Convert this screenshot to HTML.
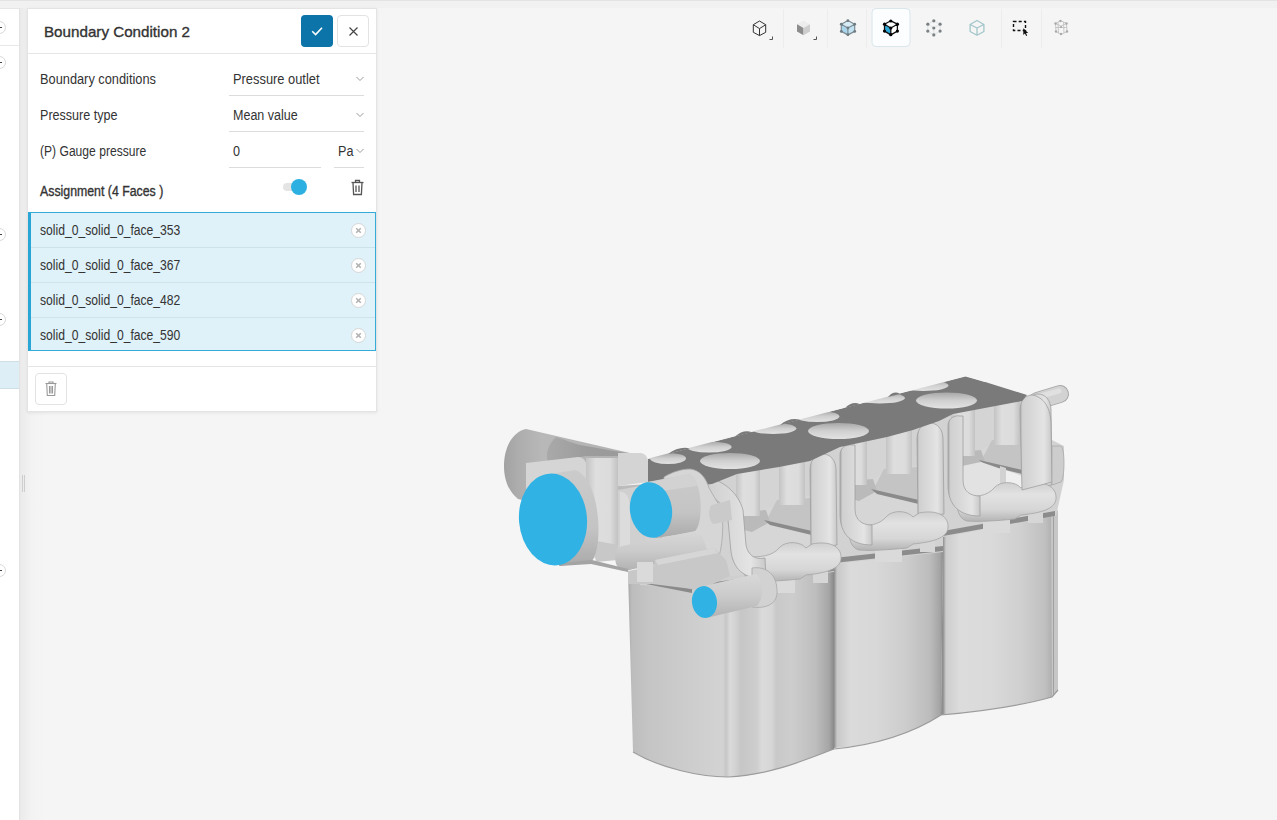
<!DOCTYPE html>
<html><head><meta charset="utf-8">
<style>
*{box-sizing:border-box;margin:0;padding:0}
html,body{width:1277px;height:820px;overflow:hidden;background:#f5f5f5;font-family:"Liberation Sans",sans-serif;color:#333}
.abs{position:absolute}
#topline{left:0;top:0;width:1277px;height:1px;background:#e3e3e3}
#sidebar{left:0;top:8px;width:20px;height:812px;background:#fff;border-right:1px solid #e2e2e2;border-top:1px solid #e6e6e6}
#band{left:0;top:1px;width:1277px;height:7px;background:#f1f1f1}
#gutter{left:20px;top:8px;width:24px;height:812px;background:linear-gradient(to right,#eaeaea 0px,#efefef 6px,#f3f3f3 12px,#f5f5f5 24px)}
.sbcirc{position:absolute;left:-7px;width:13px;height:13px;border:1px solid #d8d8d8;border-radius:50%;background:#fff}
.sbcirc:after{content:"";position:absolute;left:5px;top:5px;width:3px;height:1px;background:#444}
#panel{left:27px;top:8px;width:350px;height:404px;background:#fff;border:1px solid #e4e4e4;box-shadow:0 1px 3px rgba(0,0,0,0.08)}
.lbl{position:absolute;font-size:14px;line-height:14px;color:#333;white-space:nowrap;transform-origin:0 0}
.uline{position:absolute;height:1px;background:#dcdcdc}
.chev{position:absolute;width:7px;height:5px}
</style></head><body>
<!--MODEL--><svg class="abs" style="left:0;top:0" width="1277" height="820" viewBox="0 0 1277 820"><defs><linearGradient id="cyl1" x1="628" y1="0" x2="834" y2="0" gradientUnits="userSpaceOnUse"><stop offset="0.0" stop-color="#a8a8a8"/><stop offset="0.0194" stop-color="#bdbdbd"/><stop offset="0.1068" stop-color="#c5c5c5"/><stop offset="0.301" stop-color="#cdcdcd"/><stop offset="0.4612" stop-color="#d3d3d3"/><stop offset="0.4757" stop-color="#c6c6c6"/><stop offset="0.4951" stop-color="#dadada"/><stop offset="0.5243" stop-color="#d1d1d1"/><stop offset="0.5485" stop-color="#c6c6c6"/><stop offset="0.6262" stop-color="#cecece"/><stop offset="0.6505" stop-color="#dbdbdb"/><stop offset="0.699" stop-color="#d6d6d6"/><stop offset="0.7184" stop-color="#c9c9c9"/><stop offset="0.7961" stop-color="#cdcdcd"/><stop offset="0.9078" stop-color="#bebebe"/><stop offset="0.9757" stop-color="#a6a6a6"/><stop offset="1.0" stop-color="#888888"/></linearGradient><linearGradient id="cyl2" x1="834" y1="0" x2="943" y2="0" gradientUnits="userSpaceOnUse"><stop offset="0.0" stop-color="#8c8c8c"/><stop offset="0.0275" stop-color="#c8c8c8"/><stop offset="0.1468" stop-color="#dadada"/><stop offset="0.3761" stop-color="#d8d8d8"/><stop offset="0.6514" stop-color="#cdcdcd"/><stop offset="0.8807" stop-color="#bcbcbc"/><stop offset="0.9725" stop-color="#a4a4a4"/><stop offset="1.0" stop-color="#8c8c8c"/></linearGradient><linearGradient id="cyl3" x1="943" y1="0" x2="1055" y2="0" gradientUnits="userSpaceOnUse"><stop offset="0.0" stop-color="#8e8e8e"/><stop offset="0.0268" stop-color="#cdcdcd"/><stop offset="0.1518" stop-color="#dcdcdc"/><stop offset="0.4196" stop-color="#dadada"/><stop offset="0.6875" stop-color="#d0d0d0"/><stop offset="0.9107" stop-color="#c0c0c0"/><stop offset="1.0" stop-color="#a8a8a8"/></linearGradient><linearGradient id="head" x1="504" y1="0" x2="600" y2="0" gradientUnits="userSpaceOnUse"><stop offset="0" stop-color="#a2a2a2"/><stop offset="0.15" stop-color="#adadad"/><stop offset="0.4" stop-color="#b8b8b8"/><stop offset="1" stop-color="#b4b4b4"/></linearGradient><linearGradient id="topband" x1="545" y1="0" x2="648" y2="0" gradientUnits="userSpaceOnUse"><stop offset="0" stop-color="#aaaaaa"/><stop offset="0.4" stop-color="#9c9c9c"/><stop offset="1" stop-color="#999999"/></linearGradient><linearGradient id="tube" x1="0" y1="0" x2="1" y2="0"><stop offset="0" stop-color="#c4c4c4"/><stop offset="0.3" stop-color="#dedede"/><stop offset="0.75" stop-color="#dcdcdc"/><stop offset="1" stop-color="#c2c2c2"/></linearGradient><linearGradient id="arch" x1="0" y1="0" x2="1" y2="0"><stop offset="0" stop-color="#a8a8a8"/><stop offset="0.08" stop-color="#d0d0d0"/><stop offset="0.5" stop-color="#dcdcdc"/><stop offset="0.75" stop-color="#e4e4e4"/><stop offset="1" stop-color="#c8c8c8"/></linearGradient><linearGradient id="hole" x1="0" y1="0" x2="0" y2="1"><stop offset="0" stop-color="#a8a8a8"/><stop offset="0.5" stop-color="#d0d0d0"/><stop offset="1" stop-color="#e2e2e2"/></linearGradient><linearGradient id="bodyc" x1="0" y1="0" x2="0" y2="1"><stop offset="0" stop-color="#cbcbcb"/><stop offset="0.6" stop-color="#c4c4c4"/><stop offset="1" stop-color="#aaaaaa"/></linearGradient><linearGradient id="rodg" x1="0" y1="0" x2="0" y2="1"><stop offset="0" stop-color="#d8d8d8"/><stop offset="0.5" stop-color="#cbcbcb"/><stop offset="1" stop-color="#b2b2b2"/></linearGradient><linearGradient id="railg" x1="0" y1="0" x2="0" y2="1"><stop offset="0" stop-color="#cfcfcf"/><stop offset="0.3" stop-color="#e2e2e2"/><stop offset="0.7" stop-color="#d6d6d6"/><stop offset="1" stop-color="#b4b4b4"/></linearGradient><linearGradient id="wedgeg" x1="0" y1="0" x2="0" y2="1"><stop offset="0" stop-color="#d0d0d0"/><stop offset="1" stop-color="#bcbcbc"/></linearGradient></defs><path d="M628,572 L633,752 C660,768 700,777 728,777 C770,775 805,760 834,749 L834,570 L690,586 Z" fill="url(#cyl1)" /><path d="M834,562 L834,748 C865,746 905,738 941,715 L943,550 Z" fill="url(#cyl2)" /><path d="M943,535 L941,715 C975,712 1020,706 1052,697 L1055,515 Z" fill="url(#cyl3)" /><path d="M1051,514 L1058,510 L1058,690 L1052,697 Z" fill="#c6c6c6" /><path d="M1053,515 L1054,515 L1054,695 L1053,696 Z" fill="#a0a0a0" /><path d="M633,752 C660,768 700,777 728,777 C770,775 805,760 834,749 C865,746 905,738 941,715 C975,712 1020,706 1052,697 L1058,690" fill="none" stroke="#9c9c9c" stroke-width="1.2"/><path d="M645,470 L1025,397 L1052,440 L1064,446 L1064,480 L1056,516 L943,537 L943,552 L834,564 L834,572 L700,588 L640,585 Z" fill="#d2d2d2" /><path d="M630,572 L700,580 L834,564 L834,570 L700,588 Z" fill="#cfcfcf" /><path d="M634,577 L692,589 L692,593 L636,582 Z" fill="#8a8a8a" /><path d="M700,584 L834,566 L834,571 L700,589 Z" fill="#8e8e8e" /><path d="M834,558 L943,546 L943,551 L834,563 Z" fill="#8c8c8c" /><path d="M943,531 L1055,511 L1055,516 L943,536 Z" fill="#8c8c8c" /><path d="M963,466 L1004,458 L1020,463 L1020,489 L963,496 Z" fill="#e4e4e4" /><path d="M1006,462 L1021,464 L1021,488 L1007,490 Z" fill="#efefef" /><path d="M1000,458 L1006,458 L1006,490 L1000,491 Z" fill="#d0d0d0" /><path d="M1037,401 L1060,394" stroke="#a6a6a6" stroke-width="18" stroke-linecap="round"/><path d="M1037,401 L1060,394" stroke="#d2d2d2" stroke-width="16" stroke-linecap="round"/><path d="M1037,397 L1059,391" stroke="#e0e0e0" stroke-width="5" stroke-linecap="round"/><path d="M746.0,500.0 L835.0,495.0 835.0,560.0 746.0,572.0 Z" fill="#d6d6d6" /><path d="M760.0,470.0 L779.0,466.0 779.0,503.0 760.0,512.0 Z" fill="#d4d4d4" /><path d="M777.0,500.0 L812.0,498.0 822.0,537.0 766.0,521.0 Z" fill="#c4c4c4" /><path d="M742.0,512.0 L766.0,510.0 770.0,522.0 752.0,532.0 744.0,530.0 Z" fill="#bababa" /><path d="M764.0,520.0 L812.0,531.0 820.0,537.0 770.0,525.0 Z" fill="#8a8a8a" /><rect x="736" y="466" width="24" height="50" fill="url(#tube)"/><rect x="779" y="455" width="26" height="50" fill="url(#tube)"/><rect x="768" y="579" width="27" height="14" fill="#dadada"/><rect x="813" y="568" width="15" height="15" fill="#d6d6d6"/><path d="M810.0,470.0 C810.0,458.0 818.0,454.0 823.0,454.0 C830.0,454.0 836.0,460.0 836.0,470.0 L837.0,545.0 811.0,548.0 Z" fill="url(#arch)" stroke="#a0a0a0" stroke-width="0.8"/><path d="M745.0,557.0 C760.0,557.0 772.0,557.0 780.0,547.0 C786.0,541.0 800.0,541.0 806.0,548.0 L812.0,544.0 C832.0,540.0 842.0,548.0 841.0,559.0 C840.0,569.0 826.0,573.0 806.0,575.0 L800.0,579.0 C780.0,581.0 762.0,582.0 752.0,581.0 C742.0,579.0 740.0,562.0 745.0,557.0 Z" fill="url(#railg)" stroke="#a4a4a4" stroke-width="0.8"/><path d="M853.0,469.0 L942.0,464.0 942.0,529.0 853.0,541.0 Z" fill="#d6d6d6" /><path d="M867.0,439.0 L886.0,435.0 886.0,472.0 867.0,481.0 Z" fill="#d4d4d4" /><path d="M884.0,469.0 L919.0,467.0 929.0,506.0 873.0,490.0 Z" fill="#c4c4c4" /><path d="M849.0,481.0 L873.0,479.0 877.0,491.0 859.0,501.0 851.0,499.0 Z" fill="#bababa" /><path d="M871.0,489.0 L919.0,500.0 927.0,506.0 877.0,494.0 Z" fill="#8a8a8a" /><rect x="843" y="435" width="24" height="50" fill="url(#tube)"/><rect x="886" y="424" width="26" height="50" fill="url(#tube)"/><rect x="875" y="548" width="27" height="14" fill="#dadada"/><rect x="920" y="537" width="15" height="15" fill="#d6d6d6"/><path d="M917.0,439.0 C917.0,427.0 925.0,423.0 930.0,423.0 C937.0,423.0 943.0,429.0 943.0,439.0 L944.0,514.0 918.0,517.0 Z" fill="url(#arch)" stroke="#a0a0a0" stroke-width="0.8"/><path d="M852.0,526.0 C867.0,526.0 879.0,526.0 887.0,516.0 C893.0,510.0 907.0,510.0 913.0,517.0 L919.0,513.0 C939.0,509.0 949.0,517.0 948.0,528.0 C947.0,538.0 933.0,542.0 913.0,544.0 L907.0,548.0 C887.0,550.0 869.0,551.0 859.0,550.0 C849.0,548.0 847.0,531.0 852.0,526.0 Z" fill="url(#railg)" stroke="#a4a4a4" stroke-width="0.8"/><path d="M961.0,440.0 L1050.0,435.0 1050.0,500.0 961.0,512.0 Z" fill="#d6d6d6" /><path d="M975.0,410.0 L994.0,406.0 994.0,443.0 975.0,452.0 Z" fill="#d4d4d4" /><path d="M992.0,440.0 L1027.0,438.0 1037.0,477.0 981.0,461.0 Z" fill="#c4c4c4" /><path d="M957.0,452.0 L981.0,450.0 985.0,462.0 967.0,472.0 959.0,470.0 Z" fill="#bababa" /><path d="M979.0,460.0 L1027.0,471.0 1035.0,477.0 985.0,465.0 Z" fill="#8a8a8a" /><rect x="951" y="406" width="24" height="50" fill="url(#tube)"/><rect x="994" y="395" width="26" height="50" fill="url(#tube)"/><rect x="983" y="519" width="27" height="14" fill="#dadada"/><rect x="1028" y="508" width="15" height="15" fill="#d6d6d6"/><path d="M962,466 L981,462 L1004,470 L1022,476 L1022,492 L962,498 Z" fill="#e2e2e2" /><path d="M1005,470 L1022,476 L1022,492 L1006,493 Z" fill="#efefef" /><path d="M1000,466 L1006,468 L1006,494 L1000,494 Z" fill="#d2d2d2" /><path d="M1025.0,410.0 C1025.0,398.0 1033.0,394.0 1038.0,394.0 C1045.0,394.0 1051.0,400.0 1051.0,410.0 L1052.0,485.0 1026.0,488.0 Z" fill="url(#arch)" stroke="#a0a0a0" stroke-width="0.8"/><path d="M960.0,497.0 C975.0,497.0 987.0,497.0 995.0,487.0 C1001.0,481.0 1015.0,481.0 1021.0,488.0 L1027.0,484.0 C1047.0,480.0 1057.0,488.0 1056.0,499.0 C1055.0,509.0 1041.0,513.0 1021.0,515.0 L1015.0,519.0 C995.0,521.0 977.0,522.0 967.0,521.0 C957.0,519.0 955.0,502.0 960.0,497.0 Z" fill="url(#railg)" stroke="#a4a4a4" stroke-width="0.8"/><path d="M840,455 C840,447 847,444 852,445 L855,445 L855,509 C855,521 863,525 872,525 L872,545 C852,545 840,535 840,514 Z" fill="url(#arch)" stroke="#a0a0a0" stroke-width="0.8"/><path d="M948,426 C948,418 955,415 960,416 L963,416 L963,480 C963,492 971,496 980,496 L980,516 C960,516 948,506 948,485 Z" fill="url(#arch)" stroke="#a0a0a0" stroke-width="0.8"/><path d="M708,478 C722,480 738,492 743,510 L746,545 C748,556 756,560 765,558 L766,578 C748,580 734,572 731,552 L728,520 C726,505 716,498 704,494 Z" fill="url(#arch)" stroke="#a0a0a0" stroke-width="0.8"/><path d="M1020,410 C1020,400 1026,395 1032,395 C1044,397 1051,408 1051,425 L1052,482 L1022,490 Z" fill="url(#arch)" stroke="#a0a0a0" stroke-width="0.8"/><path d="M648,459 L966,376 L1027,395 L1022,401 L953,414 L939,421 L913,430 L887,437 L840,447 L810,461 L779,467 L737,474 L712,484 L690,486 L670,480 L648,482 Z" fill="#7a7a7a" /><ellipse cx="668.0" cy="458.5" rx="18.0" ry="5.5" fill="url(#hole)" /><ellipse cx="709.0" cy="447.0" rx="22.6" ry="5.5" fill="url(#hole)" /><ellipse cx="773.2" cy="428.5" rx="23.2" ry="5.5" fill="url(#hole)" /><ellipse cx="817.2" cy="416.5" rx="22.2" ry="5.5" fill="url(#hole)" /><ellipse cx="879.8" cy="398.0" rx="25.2" ry="5.5" fill="url(#hole)" /><ellipse cx="923.1" cy="385.5" rx="25.4" ry="5.5" fill="url(#hole)" /><path d="M640,470 L648.5,458.5 L965.4,376.5 L985,382 L985,360 L640,360 Z" fill="#f5f5f5" /><path d="M668,454.0 Q679.0,445.6 690,448.3 Z" fill="#7a7a7a" /><path d="M735,436.6 Q743.5,428.9 752,432.2 Z" fill="#7a7a7a" /><path d="M780,425.0 Q790.0,416.9 800,419.8 Z" fill="#7a7a7a" /><path d="M845,408.1 Q852.5,400.7 860,404.3 Z" fill="#7a7a7a" /><path d="M888,397.0 Q894.0,390.0 900,393.9 Z" fill="#7a7a7a" /><ellipse cx="730" cy="461" rx="30" ry="8" fill="url(#hole)" /><ellipse cx="838.5" cy="431" rx="30.5" ry="8" fill="url(#hole)" /><ellipse cx="946.5" cy="400.5" rx="30.5" ry="8" fill="url(#hole)" /><path d="M1052,446 L1061,446 C1065,448 1065,478 1061,482 L1052,485 Z" fill="#cdcdcd" stroke="#a8a8a8" stroke-width="0.8"/><path d="M526,429 L643,456 L646,472 L600,474 L548,506 L518,499 C508,491 504,479 504,466 C504,448 512,432 526,429 Z" fill="url(#head)" /><path d="M556,437 C565,440 570,442 580,445 L643,456 L648,464 L618,456 L586,456 L548,463 C545,455 548,444 556,437 Z" fill="url(#topband)" /><path d="M526,463 L578,457 C584,457 587,462 587,470 L587,492 L548,502 L526,502 Z" fill="#d5d5d5" /><rect x="586" y="458" width="32" height="100" fill="url(#tube)"/><path d="M618,453 L641,453 C646,454 648,458 648,462 L648,482 L618,486 Z" fill="#d4d4d4" /><path d="M618,486 L648,484 L648,520 L618,522 Z" fill="#bbbbbb" /><path d="M618,490 L640,486 L646,500 L646,548 L618,552 Z" fill="#d0d0d0" /><path d="M620,492 C626,491 630,498 630,508 L630,550 L620,551 Z" fill="#dcdcdc" /><path d="M592,540 L618,545 L618,560 L596,562 Z" fill="#c8c8c8" /><path d="M664,477 C672,472 682,469 690,469 C700,470 706,478 709,488 L716,500 C722,508 724,520 722,540 C720,560 714,574 700,578 L660,562 Z" fill="#d6d6d6" stroke="#a8a8a8" stroke-width="0.8"/><path d="M712,505 L730,500 L732,520 L714,524 C708,522 708,507 712,505 Z" fill="#cacaca" /><path d="M551,474 L575,470 C600,478 604,545 592,561 L559,566 Z" fill="url(#bodyc)" /><path d="M647,482 L690,474 C703,482 704,525 694,532 L656,538 Z" fill="url(#bodyc)" /><path d="M650,482 L690,474 C694,476 696,480 697,486 L655,492 Z" fill="#d2d2d2" /><path d="M622,546 L700,530 L708,552 L625,571 C613,571 612,549 622,546 Z" fill="url(#rodg)" /><path d="M628,571 L654,566 L654,584 L628,584 Z" fill="#c8c8c8" /><path d="M560,563 L592,560 L628,569 L628,572 L591,564 L560,566 Z" fill="#a4a4a4" /><path d="M655,560 L714,548 L726,560 L730,576 L700,590 L652,584 Z" fill="#c8c8c8" /><path d="M655,560 L714,548 L718,553 L658,565 Z" fill="#d6d6d6" /><rect x="637" y="562" width="16" height="20" fill="#dadada"/><path d="M752,568 C766,566 778,574 777,594 C776,604 766,609 752,607 Z" fill="#d2d2d2" stroke="#a8a8a8" stroke-width="0.8"/><path d="M704,586 L756,574 C764,580 764,598 757,606 L706,618 Z" fill="url(#rodg)" /><ellipse cx="553" cy="519.5" rx="34" ry="46" fill="#30b3e4" transform="rotate(-5 553 519.5)" /><ellipse cx="651" cy="510" rx="21" ry="28" fill="#30b3e4" transform="rotate(-9 651 510)" /><ellipse cx="704.5" cy="602" rx="12.5" ry="16" fill="#30b3e4" transform="rotate(-8 704.5 602)" /></svg><!--/MODEL-->
<div id="topline" class="abs"></div>
<div id="band" class="abs"></div>
<svg class="abs" style="left:0;top:0" width="1277" height="60" viewBox="0 0 1277 60">
<g stroke="#ededed" stroke-width="1">
<line x1="783.5" y1="9" x2="783.5" y2="48"/><line x1="827.5" y1="9" x2="827.5" y2="48"/><line x1="866.5" y1="9" x2="866.5" y2="48"/><line x1="1001.5" y1="9" x2="1001.5" y2="48"/><line x1="1041.5" y1="9" x2="1041.5" y2="48"/>
</g>
<rect x="872" y="8.5" width="38" height="38" rx="4" fill="#fbfdfe" stroke="#d9e6ec" stroke-width="1"/>
<!-- icon1 wire cube -->
<g fill="none" stroke="#333" stroke-width="1" stroke-linejoin="round">
<path d="M759.5,21 L753.3,24.7 L753.3,32.3 L759.5,35.6 L765.7,32.3 L765.7,24.7 Z M753.3,24.7 L759.5,28.6 L765.7,24.7 M759.5,28.6 L759.5,35.6"/>
</g>
<path d="M769.5,39.5 H772.5 V36.5" fill="none" stroke="#555" stroke-width="1"/>
<!-- icon2 solid gray cube -->
<path d="M803.5,20.5 L797,24.2 L803.5,28 L810,24.2 Z" fill="#ececec"/>
<path d="M797,24.2 L803.5,28 L803.5,35.2 L797,31.5 Z" fill="#8c8c8c"/>
<path d="M810,24.2 L803.5,28 L803.5,35.2 L810,31.5 Z" fill="#cdcdcd"/>
<path d="M813.5,39.5 H816.5 V36.5" fill="none" stroke="#555" stroke-width="1"/>
<!-- icon3 blue cube -->
<path d="M847.9,20.5 L841.3,24.2 L847.9,28 L854.7,24.2 Z" fill="#d6ebf5"/>
<path d="M841.3,24.2 L847.9,28 L847.9,34.9 L841.3,31.4 Z" fill="#a9d6ec"/>
<path d="M854.7,24.2 L847.9,28 L847.9,34.9 L854.7,31.4 Z" fill="#c2e2f1"/>
<g fill="none" stroke="#7d8b92" stroke-width="1.2" stroke-linejoin="round">
<path d="M847.9,20.5 L841.3,24.2 L841.3,31.4 L847.9,34.9 L854.7,31.4 L854.7,24.2 Z M841.3,24.2 L847.9,28 L854.7,24.2 M847.9,28 L847.9,34.9"/>
</g>
<g fill="#6f7c83"><circle cx="847.9" cy="20.7" r="1.4"/><circle cx="841.3" cy="24.2" r="1.4"/><circle cx="854.7" cy="24.2" r="1.4"/><circle cx="847.9" cy="28" r="1.4"/><circle cx="841.3" cy="31.4" r="1.4"/><circle cx="854.7" cy="31.4" r="1.4"/><circle cx="847.9" cy="34.7" r="1.4"/></g>
<!-- icon4 selected black cube -->
<path d="M884.5,24.2 L890.8,28 L890.8,34.9 L884.5,31.1 Z" fill="#2ea9da"/>
<path d="M890.8,20.8 L884.5,24.2 L890.8,28 L897.4,24.2 Z" fill="#fff"/>
<path d="M897.4,24.2 L890.8,28 L890.8,34.9 L897.4,31.1 Z" fill="#fff"/>
<g fill="none" stroke="#111" stroke-width="1.3" stroke-linejoin="round">
<path d="M890.8,20.8 L884.5,24.2 L884.5,31.1 L890.8,34.9 L897.4,31.1 L897.4,24.2 Z M884.5,24.2 L890.8,28 L897.4,24.2 M890.8,28 L890.8,34.9"/>
</g>
<g fill="#000"><circle cx="890.8" cy="21" r="1.6"/><circle cx="884.5" cy="24.2" r="1.6"/><circle cx="897.4" cy="24.2" r="1.6"/><circle cx="890.8" cy="28" r="1.6"/><circle cx="884.5" cy="31.1" r="1.6"/><circle cx="897.4" cy="31.1" r="1.6"/><circle cx="890.8" cy="34.7" r="1.6"/></g>
<!-- icon5 dotted -->
<g fill="none" stroke="#d6dde0" stroke-width="0.8"><path d="M933.8,20.8 L927.8,24.2 L927.8,31.1 L933.8,34.9 L940.1,31.1 L940.1,24.2 Z M927.8,24.2 L933.8,28 L940.1,24.2 M933.8,28 L933.8,34.9"/></g>
<g fill="#7b8083"><circle cx="933.8" cy="20.8" r="1.6"/><circle cx="927.8" cy="24.2" r="1.6"/><circle cx="940.1" cy="24.2" r="1.6"/><circle cx="933.8" cy="28" r="1.6"/><circle cx="927.8" cy="31.1" r="1.6"/><circle cx="940.1" cy="31.1" r="1.6"/><circle cx="933.8" cy="34.9" r="1.6"/></g>
<!-- icon6 light outline cube -->
<g fill="none" stroke="#a3c6ca" stroke-width="1.3" stroke-linejoin="round">
<path d="M977,20.5 L970.1,24.5 L970.1,31.5 L977,35.2 L983.9,31.5 L983.9,24.5 Z M970.1,24.5 L977,28 L983.9,24.5 M977,28 L977,35.2"/>
</g>
<!-- icon7 dashed rect + cursor -->
<rect x="1013.5" y="21.5" width="12" height="9" fill="none" stroke="#111" stroke-width="1.4" stroke-dasharray="3 2.2"/>
<path d="M1023.3,28.2 L1023.3,35 L1024.9,33.4 L1026.2,36 L1027.2,35.5 L1026,33 L1028.2,33 Z" fill="#111"/>
<!-- icon8 mesh -->
<g fill="none" stroke="#c2c2c2" stroke-width="0.9"><path d="M1060.5,20.5 L1055.5,23.5 L1056,31.5 L1061,34.5 L1067,31.5 L1066.5,23.5 Z M1058,22 L1058.5,33 M1063.5,22 L1064,33 M1055.8,27.5 L1066.8,27.5 M1055.5,23.5 L1061,26 L1066.5,23.5"/></g>
<g fill="#a9a9a9"><circle cx="1060.5" cy="21" r="1.2"/><circle cx="1055.5" cy="23.5" r="1.2"/><circle cx="1066.5" cy="23.5" r="1.2"/><circle cx="1056" cy="31.5" r="1.2"/><circle cx="1067" cy="31.5" r="1.2"/><circle cx="1061" cy="34" r="1.2"/><circle cx="1061" cy="27" r="1.1"/></g>
</svg>
<div id="sidebar" class="abs">
  <div class="abs" style="left:0;top:36px;width:19px;height:1px;background:#e8e8e8"></div>
  <div class="sbcirc" style="top:12px"></div>
  <div class="sbcirc" style="top:47px"></div>
  <div class="sbcirc" style="top:219px"></div>
  <div class="sbcirc" style="top:304px"></div>
  <div class="sbcirc" style="top:555px"></div>
  <div class="abs" style="left:0;top:352px;width:19px;height:28px;background:#deeef6;border-top:1px solid #cfdfe8;border-bottom:1px solid #cfdfe8"></div>
</div>
<div id="gutter" class="abs">
  <div class="abs" style="left:2px;top:467px;width:1px;height:17px;background:#cdcdcd"></div>
  <div class="abs" style="left:4px;top:467px;width:1px;height:17px;background:#cdcdcd"></div>
</div>
<div id="panel" class="abs"></div>
<div class="abs" style="left:28px;top:53px;width:348px;height:1px;background:#e6e6e6"></div>
<div class="lbl" style="left:44px;top:24px;font-size:15px;line-height:15px;color:#333;-webkit-text-stroke:0.35px #333;transform:scaleX(1.012)">Boundary Condition 2</div>
<div class="abs" style="left:301px;top:15px;width:32px;height:32px;background:#0c74a8;border-radius:4px">
  <svg width="32" height="32" style="position:absolute;left:0;top:0"><path d="M11.2 16.2 L14.6 19.6 L21 12.8" fill="none" stroke="#fff" stroke-width="1.6"/></svg>
</div>
<div class="abs" style="left:337px;top:15px;width:32px;height:32px;background:#fff;border:1px solid #e3e3e3;border-radius:4px">
  <svg width="30" height="30" style="position:absolute;left:0;top:0"><path d="M11.5 11.5 L19.5 19.5 M19.5 11.5 L11.5 19.5" fill="none" stroke="#444" stroke-width="1.15"/></svg>
</div>
<div class="lbl" style="left:40px;top:72px;transform:scaleX(0.914)">Boundary conditions</div>
<div class="lbl" style="left:40px;top:108px;transform:scaleX(0.897)">Pressure type</div>
<div class="lbl" style="left:40px;top:144px;transform:scaleX(0.864)">(P) Gauge pressure</div>
<div class="lbl" style="left:233px;top:72px;transform:scaleX(0.919)">Pressure outlet</div>
<div class="lbl" style="left:233px;top:108px;transform:scaleX(0.895)">Mean value</div>
<div class="lbl" style="left:233px;top:144px;transform:scaleX(0.9)">0</div>
<div class="lbl" style="left:338px;top:144px;transform:scaleX(0.9)">Pa</div>
<div class="uline" style="left:229px;top:95px;width:135px"></div>
<div class="uline" style="left:229px;top:131px;width:135px"></div>
<div class="uline" style="left:229px;top:167px;width:92px"></div>
<div class="uline" style="left:334px;top:167px;width:30px"></div>
<svg class="abs" style="left:355px;top:75px" width="10" height="8"><path d="M1.5 2 L5 5.5 L8.5 2" fill="none" stroke="#9a9a9a" stroke-width="1"/></svg>
<svg class="abs" style="left:355px;top:111px" width="10" height="8"><path d="M1.5 2 L5 5.5 L8.5 2" fill="none" stroke="#9a9a9a" stroke-width="1"/></svg>
<svg class="abs" style="left:355px;top:147px" width="10" height="8"><path d="M1.5 2 L5 5.5 L8.5 2" fill="none" stroke="#9a9a9a" stroke-width="1"/></svg>
<div class="lbl" style="left:40px;top:184px;color:#333;-webkit-text-stroke:0.35px #333;transform:scaleX(0.88)">Assignment (4 Faces )</div>
<div class="abs" style="left:283px;top:183px;width:16px;height:8px;background:#e4e4e4;border-radius:4px"></div>
<div class="abs" style="left:291px;top:179px;width:16px;height:16px;background:#2cb0e2;border-radius:50%"></div>
<svg class="abs" style="left:349px;top:178px" width="18" height="19"><g fill="none" stroke="#555" stroke-width="1.3"><path d="M2.5 4.5 H14.5"/><path d="M6.5 4.5 V2.5 H10.5 V4.5"/><path d="M4 4.5 L4.6 16.5 H12.4 L13 4.5"/><path d="M7 7.5 V14 M10 7.5 V14"/></g></svg>
<div class="abs" style="left:28px;top:212px;width:348px;height:139px;background:#dff1f9;border:1px solid #35acd8;border-left:3px solid #2aa6d6"></div>
<div class="abs" style="left:31px;top:247px;width:344px;height:1px;background:#cde3ec"></div>
<div class="abs" style="left:31px;top:282px;width:344px;height:1px;background:#cde3ec"></div>
<div class="abs" style="left:31px;top:317px;width:344px;height:1px;background:#cde3ec"></div>
<div class="lbl" style="left:40px;top:223px;transform:scaleX(0.867)">solid_0_solid_0_face_353</div>
<svg class="abs" style="left:350px;top:222px" width="17" height="17"><circle cx="8.5" cy="8.5" r="7" fill="#fff" stroke="#d6d6d6" stroke-width="1"/><path d="M6.2 6.2 L10.8 10.8 M10.8 6.2 L6.2 10.8" stroke="#b2b2b2" stroke-width="1.6"/></svg>
<div class="lbl" style="left:40px;top:258px;transform:scaleX(0.867)">solid_0_solid_0_face_367</div>
<svg class="abs" style="left:350px;top:257px" width="17" height="17"><circle cx="8.5" cy="8.5" r="7" fill="#fff" stroke="#d6d6d6" stroke-width="1"/><path d="M6.2 6.2 L10.8 10.8 M10.8 6.2 L6.2 10.8" stroke="#b2b2b2" stroke-width="1.6"/></svg>
<div class="lbl" style="left:40px;top:293px;transform:scaleX(0.867)">solid_0_solid_0_face_482</div>
<svg class="abs" style="left:350px;top:292px" width="17" height="17"><circle cx="8.5" cy="8.5" r="7" fill="#fff" stroke="#d6d6d6" stroke-width="1"/><path d="M6.2 6.2 L10.8 10.8 M10.8 6.2 L6.2 10.8" stroke="#b2b2b2" stroke-width="1.6"/></svg>
<div class="lbl" style="left:40px;top:328px;transform:scaleX(0.867)">solid_0_solid_0_face_590</div>
<svg class="abs" style="left:350px;top:327px" width="17" height="17"><circle cx="8.5" cy="8.5" r="7" fill="#fff" stroke="#d6d6d6" stroke-width="1"/><path d="M6.2 6.2 L10.8 10.8 M10.8 6.2 L6.2 10.8" stroke="#b2b2b2" stroke-width="1.6"/></svg>
<div class="abs" style="left:28px;top:366px;width:348px;height:1px;background:#e6e6e6"></div>
<div class="abs" style="left:35px;top:373px;width:32px;height:32px;background:#fff;border:1px solid #e3e3e3;border-radius:4px"></div>
<svg class="abs" style="left:43px;top:380px" width="16" height="18"><g fill="none" stroke="#999" stroke-width="1.1"><path d="M2.5 3.5 H13.5"/><path d="M6 3.5 V2 H10 V3.5"/><path d="M3.7 3.5 L4.3 15.5 H11.7 L12.3 3.5"/><path d="M6.5 6 V13.5 M8 6 V13.5 M9.5 6 V13.5"/></g></svg>

</body></html>
